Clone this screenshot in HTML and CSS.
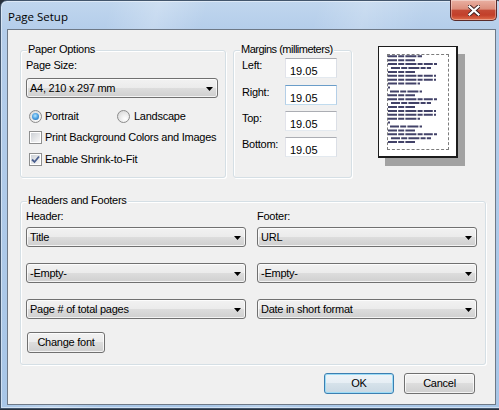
FILE: index.html
```html
<!DOCTYPE html>
<html>
<head>
<meta charset="utf-8">
<link rel="stylesheet" href="styles.css">
</head>
<body>
<div class="window">
  <div class="titlebar">
    <span class="title">Page Setup</span>
    <div class="close">
      <svg width="12" height="11" viewBox="0 0 12 11">
        <path d="M1.5 1.5 L10.5 9.5 M10.5 1.5 L1.5 9.5" stroke="#3a1d1d" stroke-width="4" stroke-linecap="square" fill="none"/>
        <path d="M1.5 1.5 L10.5 9.5 M10.5 1.5 L1.5 9.5" stroke="#ffffff" stroke-width="2.2" stroke-linecap="square" fill="none"/>
      </svg>
    </div>
  </div>
  <div class="client">
    <div class="top-row">
      <div class="group paper">
        <span class="legend">Paper Options</span>
        <div class="label">Page Size:</div>
        <div class="select size-select"><span>A4, 210 x 297 mm</span><svg class="arrow" width="7" height="4" viewBox="0 0 7 4"><polygon points="0,0 7,0 3.5,4" fill="#000"/></svg></div>
        <div class="radio-row">
          <div class="opt portrait"><span class="radio checked"></span>Portrait</div>
          <div class="opt"><span class="radio landscape"></span>Landscape</div>
        </div>
        <div class="opt cb-row cb1"><span class="check"></span>Print Background Colors and Images</div>
        <div class="opt cb-row cb2"><span class="check checked"><svg width="11" height="11" viewBox="0 0 11 11"><path d="M2 5.5 L4.5 8 L9 2.5" stroke="#4a5f8f" stroke-width="1.8" fill="none"/></svg></span>Enable Shrink-to-Fit</div>
      </div>
      <div class="group margins">
        <span class="legend tight">Margins (millimeters)</span>
        <div class="mrow"><span class="mlabel">Left:</span><span class="input">19.05</span></div>
        <div class="mrow"><span class="mlabel">Right:</span><span class="input hover">19.05</span></div>
        <div class="mrow"><span class="mlabel">Top:</span><span class="input">19.05</span></div>
        <div class="mrow"><span class="mlabel">Bottom:</span><span class="input">19.05</span></div>
      </div>
      <div class="preview">
        <div class="page">
          <div class="dashed">
            <svg width="60" height="93" viewBox="0 0 60 93" class="greek">
              <g stroke="#2e2e58" stroke-width="2" stroke-opacity="0.9" stroke-dasharray="9 1.2 6 1.2 11 1.2 5 1.2">
                <line x1="0" y1="1.3" x2="34" y2="1.3"/>
                <line x1="0" y1="5.2" x2="27" y2="5.2"/>
                <line x1="0" y1="9.1" x2="49" y2="9.1"/>
                <line x1="3" y1="13" x2="43" y2="13"/>
                <line x1="0" y1="16.9" x2="27" y2="16.9"/>
                <line x1="0" y1="20.8" x2="48" y2="20.8"/>
                <line x1="0" y1="24.7" x2="48" y2="24.7"/>
                <line x1="0" y1="28.6" x2="32" y2="28.6"/>
                <line x1="0" y1="32.5" x2="2" y2="32.5"/>
                <line x1="2" y1="36.4" x2="34" y2="36.4"/>
                <line x1="0" y1="40.3" x2="27" y2="40.3"/>
                <line x1="0" y1="44.2" x2="49" y2="44.2"/>
                <line x1="3" y1="48.1" x2="43" y2="48.1"/>
                <line x1="0" y1="52" x2="27" y2="52"/>
                <line x1="0" y1="55.9" x2="48" y2="55.9"/>
                <line x1="0" y1="59.8" x2="48" y2="59.8"/>
                <line x1="0" y1="63.7" x2="32" y2="63.7"/>
                <line x1="0" y1="67.6" x2="2" y2="67.6"/>
                <line x1="2" y1="71.5" x2="34" y2="71.5"/>
                <line x1="0" y1="75.4" x2="27" y2="75.4"/>
                <line x1="0" y1="79.3" x2="49" y2="79.3"/>
                <line x1="3" y1="83.2" x2="43" y2="83.2"/>
                <line x1="0" y1="87.1" x2="27" y2="87.1"/>
              </g>
            </svg>
          </div>
        </div>
      </div>
    </div>
    <div class="group hf">
      <span class="legend">Headers and Footers</span>
      <div class="cols">
        <div class="col">
          <div class="label">Header:</div>
          <div class="select first"><span>Title</span><svg class="arrow" width="7" height="4" viewBox="0 0 7 4"><polygon points="0,0 7,0 3.5,4" fill="#000"/></svg></div>
          <div class="select"><span>-Empty-</span><svg class="arrow" width="7" height="4" viewBox="0 0 7 4"><polygon points="0,0 7,0 3.5,4" fill="#000"/></svg></div>
          <div class="select"><span>Page # of total pages</span><svg class="arrow" width="7" height="4" viewBox="0 0 7 4"><polygon points="0,0 7,0 3.5,4" fill="#000"/></svg></div>
        </div>
        <div class="col">
          <div class="label">Footer:</div>
          <div class="select first"><span>URL</span><svg class="arrow" width="7" height="4" viewBox="0 0 7 4"><polygon points="0,0 7,0 3.5,4" fill="#000"/></svg></div>
          <div class="select"><span>-Empty-</span><svg class="arrow" width="7" height="4" viewBox="0 0 7 4"><polygon points="0,0 7,0 3.5,4" fill="#000"/></svg></div>
          <div class="select"><span>Date in short format</span><svg class="arrow" width="7" height="4" viewBox="0 0 7 4"><polygon points="0,0 7,0 3.5,4" fill="#000"/></svg></div>
        </div>
      </div>
      <button class="btn font-btn">Change font</button>
    </div>
    <div class="buttons">
      <button class="btn ok">OK</button>
      <button class="btn cancel">Cancel</button>
    </div>
  </div>
</div>
</body>
</html>
```
FILE: styles.css
```css
html, body {
  margin: 0;
  padding: 0;
}
body {
  width: 499px;
  height: 410px;
  overflow: hidden;
  background: #27303b;
  font-family: "Liberation Sans", Arial, sans-serif;
  font-size: 11px;
  letter-spacing: -0.25px;
  color: #000;
}
.window {
  width: 504px;
  height: 409px;
  box-sizing: border-box;
  border: 1px solid #43566d;
  border-radius: 7px 7px 0 0;
  padding-left: 6px;
  background:
    linear-gradient(105deg, rgba(255,255,255,0) 0, rgba(255,255,255,0) 18%, rgba(255,255,255,0.22) 26%, rgba(255,255,255,0) 34%, rgba(255,255,255,0) 52%, rgba(255,255,255,0.18) 60%, rgba(255,255,255,0) 70%),
    linear-gradient(180deg, #c0d6ee 0, #b4cdea 30px, #a8c6e7 100%);
  box-shadow: inset 0 0 0 1px rgba(255,255,255,0.45);
}
.titlebar {
  height: 28px;
  display: flex;
  align-items: flex-start;
}
.title {
  font-family: "Open Sans", "Noto Sans", sans-serif;
  font-size: 11.5px;
  letter-spacing: 0;
  line-height: 15px;
  margin: 8px 0 0 1px;
  color: #000;
}
.close {
  margin: -1px 6px 0 auto;
  width: 47px;
  height: 21px;
  box-sizing: border-box;
  border: 1px solid #5a2b2b;
  border-top: none;
  border-radius: 0 0 5px 5px;
  background: linear-gradient(180deg, #e9b0a2 0, #dc8e7c 45%, #c44a35 52%, #c23f2a 75%, #df6d4b 100%);
  box-shadow: inset 0 0 0 1px rgba(255,255,255,0.35);
  display: flex;
  align-items: center;
  justify-content: center;
}
.client {
  width: 489px;
  height: 376px;
  box-sizing: border-box;
  border: 1px solid #6e7987;
  background: #f0f0f0;
}
.top-row {
  display: flex;
  align-items: flex-start;
  padding: 16px 0 0 12px;
}
.group {
  position: relative;
  box-sizing: border-box;
  border: 1px solid #d5dfe5;
  border-radius: 3px;
  box-shadow: 1px 1px 0 #ffffff, inset 1px 1px 0 #ffffff;
}
.legend {
  position: absolute;
  top: -8px;
  left: 6px;
  padding: 0 1px;
  background: #f0f0f0;
  line-height: 13px;
  white-space: nowrap;
}
.legend.tight {
  letter-spacing: -0.5px;
}
.label {
  line-height: 13px;
}
.paper {
  width: 206px;
  height: 128px;
  margin-top: 4px;
  padding: 8px 0 0 5px;
}
.select {
  display: flex;
  align-items: flex-start;
  box-sizing: border-box;
  height: 20px;
  border: 1px solid #707070;
  border-radius: 3px;
  background: linear-gradient(180deg, #f2f2f2 0, #ebebeb 50%, #dddddd 50%, #cfcfcf 100%);
  box-shadow: inset 0 0 0 1px rgba(255,255,255,0.75);
  padding: 3px 0 0 3px;
  line-height: 13px;
  white-space: nowrap;
}
.arrow {
  margin: 5px 4px 0 auto;
  flex: none;
}
.size-select {
  width: 192px;
  margin-top: 6px;
}
.radio-row {
  display: flex;
  margin-top: 12px;
  padding-left: 3px;
}
.opt {
  display: flex;
  align-items: center;
  line-height: 13px;
  white-space: nowrap;
}
.portrait {
  width: 88px;
}
.radio {
  width: 13px;
  height: 13px;
  box-sizing: border-box;
  border-radius: 50%;
  border: 1px solid #8b8b8b;
  background: radial-gradient(circle at 65% 70%, #ffffff 0, #f0f0f0 35%, #d2d2d2 100%);
  margin-right: 3px;
  display: flex;
  align-items: center;
  justify-content: center;
  flex: none;
}
.radio.landscape {
  margin-right: 4px;
}
.radio.checked::after {
  content: "";
  width: 7px;
  height: 7px;
  border-radius: 50%;
  background: radial-gradient(circle at 45% 40%, #b9e6fd 0, #52a6e6 45%, #1a5b9e 100%);
}
.cb-row {
  padding-left: 3px;
}
.cb1 {
  margin-top: 8px;
}
.cb2 {
  margin-top: 9px;
}
.check {
  position: relative;
  width: 13px;
  height: 13px;
  box-sizing: border-box;
  border: 1px solid #8e8f8f;
  background: #ffffff;
  margin-right: 3px;
  flex: none;
}
.check::before {
  content: "";
  position: absolute;
  left: 1px;
  top: 1px;
  width: 9px;
  height: 9px;
  background: linear-gradient(135deg, #cdd1d6 0, #e8e9eb 60%, #f7f7f7 100%);
}
.check svg {
  position: absolute;
  left: 0;
  top: 0;
}
.margins {
  width: 119px;
  height: 128px;
  margin: 4px 0 0 7px;
  padding: 7px 0 0 8px;
}
.mrow {
  display: flex;
  align-items: flex-start;
  margin-bottom: 6px;
}
.mrow:first-of-type {
  margin-bottom: 7px;
}
.mlabel {
  width: 43px;
  padding-top: 1px;
  line-height: 13px;
}
.input {
  box-sizing: border-box;
  width: 52px;
  height: 20px;
  border: 1px solid;
  border-color: #abadb3 #dbdfe6 #e3e9ef #e2e3ea;
  background: #ffffff;
  padding: 6px 0 0 4px;
  line-height: 13px;
  letter-spacing: 0;
}
.input.hover {
  border-color: #6a9dc9 #b5cfe7 #c0dbee #b5cfe7;
}
.preview {
  margin-left: 26px;
}
.page {
  width: 80px;
  height: 112px;
  box-sizing: border-box;
  border: 1px solid #1c1c1c;
  border-right-width: 2px;
  border-bottom-width: 2px;
  background: #ffffff;
  box-shadow: 7px 8px 0 #a2a2a2;
  padding: 7px 0 0 8px;
}
.dashed {
  width: 62px;
  height: 96px;
  box-sizing: border-box;
  border: 1px dashed #7c7c7c;
}
.greek {
  display: block;
}
.hf {
  width: 466px;
  height: 164px;
  margin: 23px 0 0 12px;
  padding: 8px 0 0 5px;
}
.cols {
  display: flex;
  gap: 11px;
}
.col {
  width: 220px;
  display: flex;
  flex-direction: column;
}
.col .select {
  margin-top: 16px;
}
.col .select.first {
  margin-top: 4px;
}
.btn {
  box-sizing: border-box;
  height: 21px;
  border: 1px solid #707070;
  border-radius: 3px;
  background: linear-gradient(180deg, #f2f2f2 0, #ebebeb 50%, #dddddd 50%, #cfcfcf 100%);
  box-shadow: inset 0 0 0 1px rgba(255,255,255,0.75);
  font-family: "Liberation Sans", Arial, sans-serif;
  font-size: 11px;
  letter-spacing: -0.25px;
  line-height: 13px;
  color: #000;
  padding: 0;
  margin: 0;
  text-align: center;
}
.font-btn {
  display: block;
  width: 78px;
  margin: 13px 0 0 1px;
}
.buttons {
  display: flex;
  gap: 10px;
  padding-left: 316px;
  margin-top: 8px;
}
.ok {
  width: 70px;
  border-color: #3c7fb1;
  box-shadow: inset 0 0 0 1px #9ddcf6;
  background: linear-gradient(180deg, #eef4f8 0, #e6eef4 50%, #d6e2ea 50%, #c9d8e3 100%);
}
.cancel {
  width: 71px;
}
```
